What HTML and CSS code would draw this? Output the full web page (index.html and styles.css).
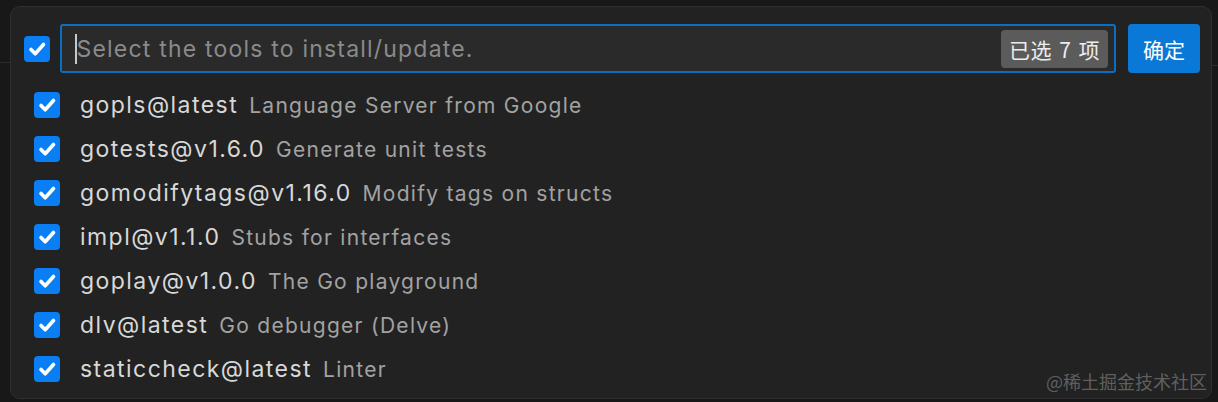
FILE: index.html
```html
<!DOCTYPE html>
<html>
<head>
<meta charset="utf-8">
<link rel="stylesheet" href="styles.css">
</head>
<body>
<div class="backdrop">
  <div class="edge-line edge-left"></div>
  <div class="edge-line edge-right"></div>
  <div class="panel">
    <div class="header">
      <span class="check check-top"><svg viewBox="0 0 26 26"><path d="M7 13.5 L11.2 17.8 L19.5 8.5" /></svg></span>
      <div class="input">
        <span class="caret"></span>
        <span class="placeholder">Select the tools to install/update.</span>
        <span class="count">已选 7 项</span>
      </div>
      <button class="ok">确定</button>
    </div>
    <ul class="list">
      <li class="row"><span class="check"><svg viewBox="0 0 26 26"><path d="M7 13.5 L11.2 17.8 L19.5 8.5" /></svg></span><span class="name">gopls@latest</span><span class="desc">Language Server from Google</span></li>
      <li class="row"><span class="check"><svg viewBox="0 0 26 26"><path d="M7 13.5 L11.2 17.8 L19.5 8.5" /></svg></span><span class="name">gotests@v1.6.0</span><span class="desc">Generate unit tests</span></li>
      <li class="row"><span class="check"><svg viewBox="0 0 26 26"><path d="M7 13.5 L11.2 17.8 L19.5 8.5" /></svg></span><span class="name">gomodifytags@v1.16.0</span><span class="desc">Modify tags on structs</span></li>
      <li class="row"><span class="check"><svg viewBox="0 0 26 26"><path d="M7 13.5 L11.2 17.8 L19.5 8.5" /></svg></span><span class="name">impl@v1.1.0</span><span class="desc">Stubs for interfaces</span></li>
      <li class="row"><span class="check"><svg viewBox="0 0 26 26"><path d="M7 13.5 L11.2 17.8 L19.5 8.5" /></svg></span><span class="name">goplay@v1.0.0</span><span class="desc">The Go playground</span></li>
      <li class="row"><span class="check"><svg viewBox="0 0 26 26"><path d="M7 13.5 L11.2 17.8 L19.5 8.5" /></svg></span><span class="name">dlv@latest</span><span class="desc">Go debugger (Delve)</span></li>
      <li class="row"><span class="check"><svg viewBox="0 0 26 26"><path d="M7 13.5 L11.2 17.8 L19.5 8.5" /></svg></span><span class="name">staticcheck@latest</span><span class="desc">Linter</span></li>
    </ul>
    <div class="watermark">@稀土掘金技术社区</div>
  </div>
</div>
</body>
</html>
```

FILE: styles.css
```css
html, body {
  margin: 0;
  padding: 0;
  background: #181818;
}
body {
  width: 1218px;
  height: 402px;
  overflow: hidden;
  font-family: Inter, "Noto Sans", "Noto Sans CJK SC", sans-serif;
}
.backdrop {
  position: relative;
  width: 1218px;
  height: 402px;
  padding: 6px 0 0 10px;
  box-sizing: border-box;
}
.edge-line {
  position: absolute;
  height: 1px;
  background: #2c2c2c;
}
.edge-left { left: 0; top: 62px; width: 10px; }
.edge-right { right: 0; top: 65px; width: 6px; }
.panel {
  position: relative;
  width: 1202px;
  height: 393px;
  box-sizing: border-box;
  background: #222222;
  border: 1px solid #2f2f2f;
  border-radius: 10px;
  padding: 17px 11px 7px 13px;
}
.header {
  display: flex;
  align-items: center;
  height: 49px;
}
.check {
  display: inline-flex;
  width: 26px;
  height: 26px;
  border-radius: 4px;
  background: #0a7ff5;
  flex: none;
}
.check svg {
  width: 26px;
  height: 26px;
}
.check path {
  fill: none;
  stroke: #ffffff;
  stroke-width: 3.6;
  stroke-linecap: round;
  stroke-linejoin: round;
}
.check-top {
  margin-right: 10px;
}
.input {
  flex: 1;
  height: 49px;
  box-sizing: border-box;
  border: 2px solid #0a6fc2;
  border-radius: 3px;
  background: #2a2a2a;
  display: flex;
  align-items: center;
  padding: 0 6px 0 13px;
}
.caret {
  width: 1.5px;
  height: 30px;
  background: #c8c8c8;
  margin-right: 0;
}
.placeholder {
  flex: 1;
  font-size: 23px;
  color: #8a8a8a;
  letter-spacing: 1.2px;
}
.count {
  height: 38px;
  display: flex;
  align-items: center;
  padding: 0 8px 0 8px;
  background: #5b5b5b;
  border-radius: 4px;
  color: #ececec;
  font-size: 21px;
  letter-spacing: 0.5px;
  word-spacing: 2px;
  font-family: "Noto Sans CJK SC", Inter, sans-serif;
}
.ok {
  margin-left: 12px;
  width: 72px;
  height: 49px;
  border: none;
  border-radius: 4px;
  background: #0a78d6;
  color: #ffffff;
  font-size: 21px;
  font-family: "Noto Sans CJK SC", sans-serif;
  padding: 0;
}
.list {
  list-style: none;
  margin: 10px 0 0 0;
  padding: 0 0 0 10px;
}
.row {
  display: flex;
  align-items: center;
  height: 44px;
}
.row .check {
  margin-right: 20px;
}
.name {
  font-size: 23px;
  color: #d8d8d8;
  letter-spacing: 1.45px;
  margin-right: 11px;
}
.desc {
  font-size: 21px;
  color: #a2a2a2;
  letter-spacing: 1.28px;
}
.watermark {
  position: absolute;
  right: 4px;
  bottom: 4px;
  font-size: 18px;
  color: rgba(150, 150, 150, 0.55);
  font-family: "Noto Sans CJK SC", sans-serif;
}
```
